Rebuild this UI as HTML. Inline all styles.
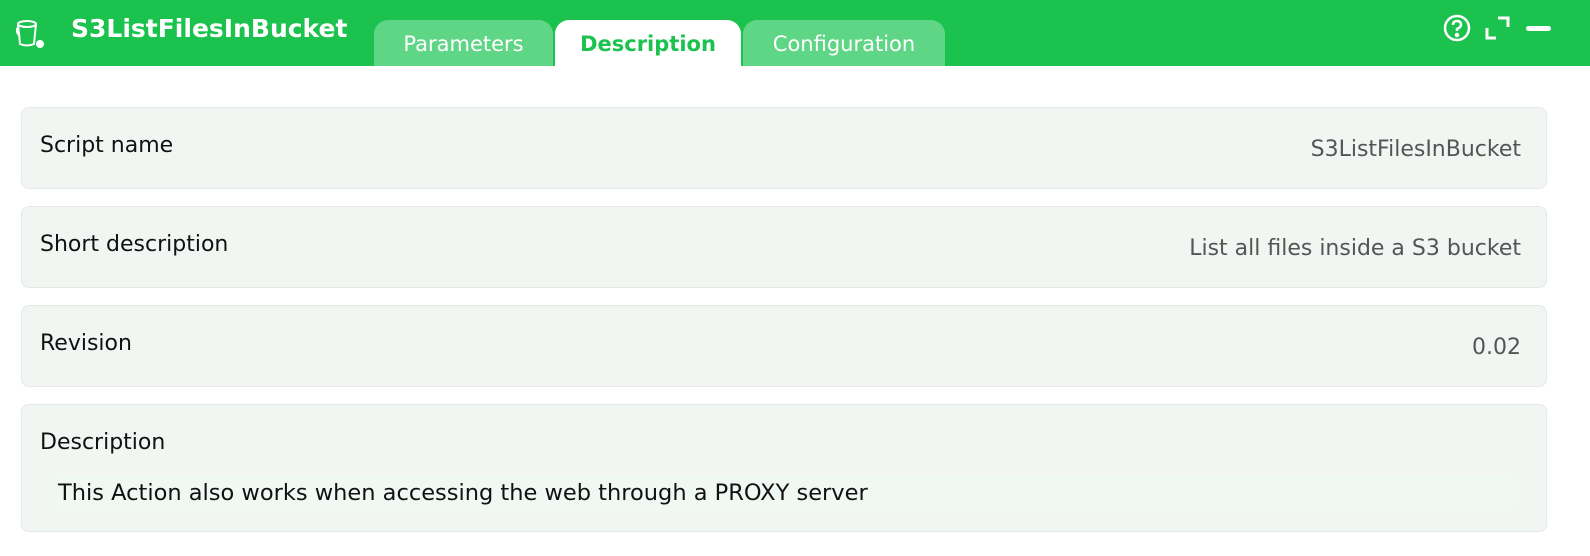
<!DOCTYPE html>
<html><head><style>
*{box-sizing:border-box;margin:0;padding:0}
body{width:1590px;height:556px;background:#fff;font-family:"DejaVu Sans","Liberation Sans",sans-serif;overflow:hidden;position:relative}
.hdr{position:absolute;left:0;top:0;width:1590px;height:66px;background:#1bc24e}
.title{position:absolute;left:71px;top:14px;color:#fff;font-weight:bold;font-size:25px}
.tab{position:absolute;top:20px;height:46px;border-radius:14px 14px 0 0;background:#5fd685;color:#fff;font-size:21px;text-align:center;line-height:48px}
.card{position:absolute;left:21px;width:1526px;background:#f2f6f3;border:1px solid #e4e9e5;border-radius:8px}
.lab{position:absolute;left:18px;font-size:22px;color:#111}
.val{position:absolute;right:25px;font-size:22px;color:#555}
</style></head><body>
<div class="hdr">
<svg style="position:absolute;left:14px;top:18px" width="34" height="34" viewBox="0 0 34 34" fill="none" stroke="#fff" stroke-width="2">
<ellipse cx="13" cy="6" rx="9" ry="3"/><path d="M4 6 L6 26 Q13 29 20 26 L22 6"/><path d="M4 9 Q1 14 6 18"/>
<circle cx="26" cy="26" r="4" fill="#fff" stroke="none"/></svg>
<div class="title">S3ListFilesInBucket</div>
<div class="tab" style="left:374px;width:179px">Parameters</div>
<div class="tab" style="left:555px;width:186px;background:#fff;color:#1bc24e;font-weight:bold">Description</div>
<div class="tab" style="left:743px;width:202px">Configuration</div>
<svg style="position:absolute;left:1443px;top:14px" width="30" height="30" viewBox="0 0 30 30" fill="none" stroke="#fff" stroke-width="2.5"><circle cx="14" cy="14" r="12"/><path d="M10 11 Q10 7 14 7 Q18 7 18 11 Q18 13 14 15 V17"/><circle cx="14" cy="21" r="1" fill="#fff"/></svg>
<svg style="position:absolute;left:1484px;top:14px" width="30" height="30" viewBox="0 0 30 30" fill="none" stroke="#fff" stroke-width="3"><path d="M14 4 H24 V13"/><path d="M3 14 V24 H12"/></svg>
<div style="position:absolute;left:1526px;top:26px;width:25px;height:5px;border-radius:3px;background:#fff"></div>
</div>
<div class="card" style="top:107px;height:82px"><div class="lab" style="top:25px">Script name</div><div class="val" style="top:29px">S3ListFilesInBucket</div></div>
<div class="card" style="top:206px;height:82px"><div class="lab" style="top:25px">Short description</div><div class="val" style="top:29px">List all files inside a S3 bucket</div></div>
<div class="card" style="top:305px;height:82px"><div class="lab" style="top:25px">Revision</div><div class="val" style="top:29px">0.02</div></div>
<div class="card" style="top:404px;height:128px"><div class="lab" style="top:25px">Description</div>
<div style="position:absolute;left:35px;top:71px;width:1458px;height:34px;background:#eff8f2;font-size:22.5px;color:#111;line-height:34px;padding-left:1px">This Action also works when accessing the web through a PROXY server</div></div>
</body></html>
